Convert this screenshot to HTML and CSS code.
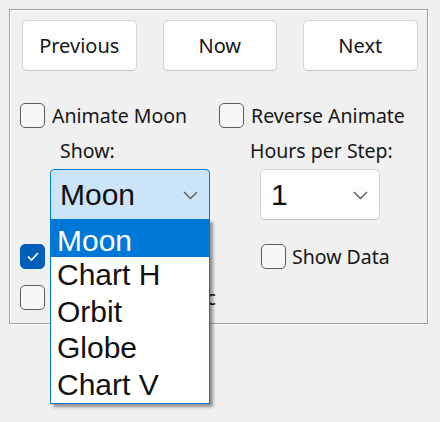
FILE: index.html
```html
<!DOCTYPE html>
<html>
<head>
<meta charset="utf-8">
<link rel="stylesheet" href="styles.css">
</head>
<body>
<div class="group">
  <div class="buttons">
    <button class="btn">Previous</button>
    <button class="btn">Now</button>
    <button class="btn">Next</button>
  </div>
  <div class="row row-checks">
    <label class="check col-left"><span class="box"></span>Animate Moon</label>
    <label class="check"><span class="box"></span>Reverse Animate</label>
  </div>
  <div class="row row-labels">
    <span class="lbl lbl-show">Show:</span>
    <span class="lbl lbl-hours">Hours per Step:</span>
  </div>
  <div class="row row-combos">
    <div class="combo combo-show"><span class="combo-text">Moon</span><svg class="chev" width="15" height="9" viewBox="0 0 15 9"><polyline points="1,1 7.5,7.5 14,1" fill="none" stroke="#5a5a5a" stroke-width="1.4"/></svg></div>
    <div class="combo combo-hours"><span class="combo-text">1</span><svg class="chev" width="15" height="9" viewBox="0 0 15 9"><polyline points="1,1 7.5,7.5 14,1" fill="none" stroke="#5a5a5a" stroke-width="1.4"/></svg></div>
  </div>
  <div class="row row-checks2">
    <label class="check col-left"><span class="box checked"><svg width="14" height="11" viewBox="0 0 14 11"><polyline points="2,5.5 5.5,9 12,2" fill="none" stroke="#ffffff" stroke-width="1.6"/></svg></span>Show Phase</label>
    <label class="check check-data"><span class="box"></span>Show Data</label>
  </div>
  <div class="row row-checks3">
    <label class="check col-left"><span class="box"></span>Show Heliocentric</label>
  </div>
</div>
<ul class="dropdown">
  <li class="item item-first selected">Moon</li>
  <li class="item">Chart H</li>
  <li class="item">Orbit</li>
  <li class="item">Globe</li>
  <li class="item">Chart V</li>
</ul>
</body>
</html>
```
FILE: styles.css
```css
html, body {
  margin: 0;
  padding: 0;
}
body {
  position: relative;
  width: 440px;
  height: 422px;
  overflow: hidden;
  background: #f0f0f0;
  font-family: "Noto Sans", "Open Sans", sans-serif;
  font-size: 19.5px;
  color: #161616;
}
.group {
  box-sizing: border-box;
  margin: 9px 0 0 9px;
  width: 419px;
  height: 315px;
  border: 1px solid #a0a0a0;
  box-shadow: inset 1px 1px 0 #ffffff, 1px 1px 0 #ffffff;
  padding-top: 10px;
}
.buttons {
  display: flex;
  gap: 26px;
  margin-left: 12px;
}
.btn {
  box-sizing: border-box;
  width: 114.5px;
  height: 51px;
  background: #fdfdfd;
  border: 1px solid #d3d3d3;
  border-bottom-color: #c4c4c4;
  border-radius: 5px;
  font-family: "Noto Sans", "Open Sans", sans-serif;
  font-size: 20px;
  color: #161616;
  padding: 0;
}
.row {
  display: flex;
  align-items: center;
}
.row-checks {
  margin-top: 32px;
  margin-left: 10px;
}
.check {
  display: flex;
  align-items: center;
  gap: 7px;
  line-height: 24px;
  white-space: nowrap;
}
.col-left {
  width: 199px;
}
.box {
  box-sizing: border-box;
  width: 25px;
  height: 25px;
  border: 1.5px solid #5c5c5c;
  border-radius: 5px;
  background: #f7f7f7;
  display: flex;
  align-items: center;
  justify-content: center;
  flex: none;
}
.box.checked {
  background: #005fb8;
  border-color: #005fb8;
}
.row-labels {
  margin-top: 11px;
  line-height: 24px;
}
.lbl-show {
  margin-left: 50px;
  width: 190px;
}
.row-combos {
  margin-top: 6px;
  align-items: flex-start;
}
.combo {
  box-sizing: border-box;
  height: 51px;
  display: flex;
  align-items: center;
  justify-content: space-between;
  font-family: "Liberation Sans", Arial, sans-serif;
  font-size: 30px;
  line-height: 49px;
  color: #111111;
}
.combo-show {
  margin-left: 40px;
  width: 160px;
  background: #cce4f7;
  border: 1px solid #0078d7;
  border-radius: 4px 4px 0 0;
  padding: 0 11px 0 9px;
}
.combo-hours {
  margin-left: 50px;
  width: 120px;
  background: #fdfdfd;
  border: 1px solid #d3d3d3;
  border-bottom-color: #c4c4c4;
  border-radius: 5px;
  padding: 0 11px 0 10px;
}
.chev {
  display: block;
  margin-top: 2px;
}
.row-checks2 {
  margin-top: 24px;
  margin-left: 10px;
}
.check-data {
  margin-left: 42px;
  gap: 6px;
}
.row-checks3 {
  margin-top: 16px;
  margin-left: 10px;
}
.dropdown {
  position: absolute;
  left: 50px;
  top: 219px;
  width: 160px;
  box-sizing: border-box;
  margin: 0;
  padding: 0;
  list-style: none;
  background: #ffffff;
  border: 1px solid #0078d7;
  box-shadow: 3px 3px 3px rgba(0, 0, 0, 0.4);
  font-family: "Liberation Sans", Arial, sans-serif;
  font-size: 30px;
  color: #111111;
}
.item {
  height: 36.5px;
  line-height: 36.5px;
  padding-left: 6px;
  white-space: nowrap;
}
.item-first {
  height: 37px;
  line-height: 33px;
  padding-top: 4px;
  box-sizing: border-box;
}
.selected {
  background: #0078d7;
  color: #ffffff;
}
```
